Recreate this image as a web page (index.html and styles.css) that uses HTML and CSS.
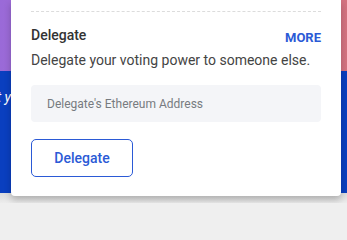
FILE: index.html
```html
<!DOCTYPE html>
<html>
<head>
<meta charset="utf-8">
<link rel="stylesheet" href="styles.css">
</head>
<body>
<div class="page">
  <div class="gutter-left"><span class="bg-text">t y</span></div>
  <div class="card">
    <div class="divider"></div>
    <div class="head">
      <h2 class="title">Delegate</h2>
      <a class="more" href="#">MORE</a>
    </div>
    <p class="desc">Delegate your voting power to someone else.</p>
    <input class="address" type="text" placeholder="Delegate's Ethereum Address">
    <button class="btn">Delegate</button>
  </div>
  <div class="gutter-right"></div>
</div>
</body>
</html>
```
FILE: styles.css
```css
html, body {
  margin: 0;
  padding: 0;
  background: #efefef;
  font-family: Roboto, "Liberation Sans", sans-serif;
}
.page {
  width: 347px;
  height: 203px;
  display: grid;
  grid-template-columns: 11px 330px 6px;
  align-items: start;
  background:
    linear-gradient(90deg, #9a6ad8 0%, #b06cbc 50%, #d4737f 100%) 0 0 / 100% 71px no-repeat,
    linear-gradient(#0a3fbf, #0a3fbf) 0 71px / 100% 122px no-repeat,
    linear-gradient(#dcdcdc, #ececec) 0 193px / 100% 10px no-repeat;
  overflow: hidden;
}
.gutter-left {
  overflow: hidden;
  height: 193px;
  display: flex;
  justify-content: flex-end;
}
.bg-text {
  margin-top: 89px;
  color: #ffffff;
  font-style: italic;
  font-size: 14px;
  line-height: 16px;
  white-space: nowrap;
}
.card {
  background: #ffffff;
  border-radius: 0 0 4px 4px;
  box-shadow: 0 4px 7px rgba(0, 0, 0, 0.22);
  padding: 11px 20px 19px 20px;
  display: flex;
  flex-direction: column;
  align-items: flex-start;
}
.divider {
  width: 100%;
  border-top: 1px dashed #dcdcdc;
}
.head {
  width: 100%;
  display: flex;
  justify-content: space-between;
  align-items: baseline;
  margin-top: 13px;
}
.title {
  margin: 0;
  font-size: 14px;
  line-height: 20px;
  font-weight: 500;
  color: #333333;
}
.more {
  font-size: 13px;
  font-weight: 700;
  color: #2b5ad6;
  text-decoration: none;
  position: relative;
  top: 2px;
}
.desc {
  margin: 5px 0 0 0;
  font-size: 14px;
  line-height: 20px;
  color: #444444;
}
.address {
  margin-top: 15px;
  width: 100%;
  height: 37px;
  flex-shrink: 0;
  box-sizing: border-box;
  border: none;
  border-radius: 4px;
  background: #f4f5f8;
  padding: 0 16px;
  font-family: Roboto, "Liberation Sans", sans-serif;
  font-size: 12px;
  color: #333;
  outline: none;
}
.address::placeholder {
  color: #777b80;
}
.btn {
  margin-top: 17px;
  width: 102px;
  height: 38px;
  flex-shrink: 0;
  box-sizing: border-box;
  background: #ffffff;
  border: 1px solid #2b5ad6;
  border-radius: 5px;
  color: #2b5ad6;
  font-family: Roboto, "Liberation Sans", sans-serif;
  font-size: 14px;
  font-weight: 500;
  cursor: pointer;
}
```
